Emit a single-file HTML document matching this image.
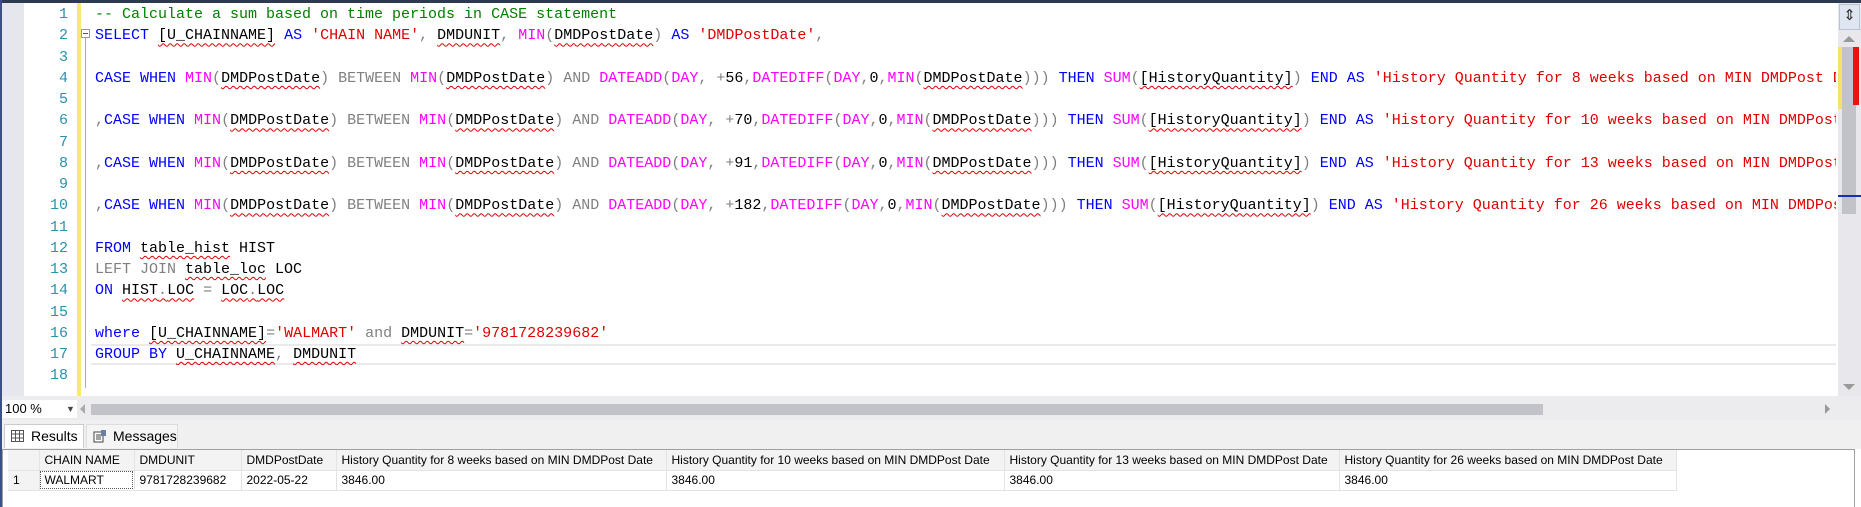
<!DOCTYPE html>
<html><head><meta charset="utf-8"><style>
*{margin:0;padding:0;box-sizing:border-box}
body{width:1861px;height:507px;overflow:hidden;background:#fff;position:relative;font-family:"Liberation Sans",Arial,sans-serif}
.top{position:absolute;left:0;top:0;width:1861px;height:3px;background:#2e3a4f}
.lb{position:absolute;left:0;top:0;width:2px;height:507px;background:#3c4f8c}
.gut{position:absolute;left:2px;top:3px;width:22px;height:393px;background:#e6e7ec}
.nums{position:absolute;left:24px;top:4px;width:44px;text-align:right;font:15px/21.25px "Liberation Mono",monospace;color:#2b91af}
.yb{position:absolute;left:77px;top:3px;width:4px;height:393px;background:#fbe86c}
.fold{position:absolute;left:81px;top:29px;width:9px;height:9px;border:1px solid #999;background:#fff}
.fold:after{content:"";position:absolute;left:1px;top:3px;width:5px;height:1px;background:#555}
.fl{position:absolute;left:85px;top:38px;width:1px;height:350px;background:#aaa}
.code{position:absolute;left:95px;top:4px;width:1741px;overflow:hidden;white-space:pre;font:15px/21.25px "Liberation Mono",monospace;color:#000}
.cur{position:absolute;left:91px;top:344px;width:1745px;height:21px;border-top:2px solid #eaeaea;border-bottom:2px solid #eaeaea}
.k{color:#0000ff}.f{color:#ff00ff}.g{color:#808080}.s{color:#e00000}.c{color:#008000}
.u{text-decoration:underline wavy #e00000;text-decoration-thickness:1px;text-underline-offset:3px}
.vs{position:absolute;left:1838px;top:3px;width:23px;height:393px;background:#e8e8ec}
.sp{position:absolute;left:1839px;top:4px;width:21px;height:26px;background:#dfe6f2;border:1px solid #b8c3d8;font-size:15px;text-align:center;line-height:22px;color:#333}
.zb{position:absolute;left:2px;top:396px;width:1859px;height:24px;background:#ececef}
.zc{position:absolute;left:2px;top:400px;width:75px;height:18px;background:#fff;font-size:13px;line-height:18px;padding-left:3px;color:#000}
.hs{position:absolute;left:91px;top:404px;width:1452px;height:11px;background:#c2c3c9}
.tabs{position:absolute;left:2px;top:420px;width:1859px;height:29px;background:#f0f0f0}
.tab{position:absolute;top:424px;height:24px;font-size:14px;line-height:22px;color:#000;padding-left:26px}
.grid{position:absolute;left:2px;top:449px;width:1853px;height:58px;background:#fff;border:1px solid #a0a0a0;border-bottom:none}
table{position:absolute;left:8px;top:450px;border-collapse:collapse;table-layout:fixed;width:1668px;font-size:12px;font-family:"Liberation Sans",Arial,sans-serif}
td{height:20px;padding:0 5px;border-right:1px solid #e3e3e3;border-bottom:1px solid #e3e3e3;white-space:nowrap;overflow:hidden;color:#000}
tr.h td{background:#f3f3f3}
</style></head><body>
<div class="top"></div>
<div class="gut"></div>
<div class="nums">1<br>2<br>3<br>4<br>5<br>6<br>7<br>8<br>9<br>10<br>11<br>12<br>13<br>14<br>15<br>16<br>17<br>18</div>
<div class="yb"></div>
<div class="fl"></div>
<div class="fold"></div>
<div class="cur"></div>
<div class="code"><span class="c">-- Calculate a sum based on time periods in CASE statement</span>
<span class="k">SELECT</span> <span class="u">[U_CHAINNAME]</span> <span class="k">AS</span> <span class="s">'CHAIN NAME'</span><span class="g">,</span> <span class="u">DMDUNIT</span><span class="g">,</span> <span class="f">MIN</span><span class="g">(</span><span class="u">DMDPostDate</span><span class="g">)</span> <span class="k">AS</span> <span class="s">'DMDPostDate'</span><span class="g">,</span>

<span class="k">CASE WHEN</span> <span class="f">MIN</span><span class="g">(</span><span class="u">DMDPostDate</span><span class="g">)</span> <span class="g">BETWEEN</span> <span class="f">MIN</span><span class="g">(</span><span class="u">DMDPostDate</span><span class="g">)</span> <span class="g">AND</span> <span class="f">DATEADD</span><span class="g">(</span><span class="f">DAY</span><span class="g">,</span> <span class="g">+</span>56<span class="g">,</span><span class="f">DATEDIFF</span><span class="g">(</span><span class="f">DAY</span><span class="g">,</span>0<span class="g">,</span><span class="f">MIN</span><span class="g">(</span><span class="u">DMDPostDate</span><span class="g">)))</span> <span class="k">THEN</span> <span class="f">SUM</span><span class="g">(</span><span class="u">[HistoryQuantity]</span><span class="g">)</span> <span class="k">END AS</span> <span class="s">'History Quantity for 8 weeks based on MIN DMDPost Date'</span>

<span class="g">,</span><span class="k">CASE WHEN</span> <span class="f">MIN</span><span class="g">(</span><span class="u">DMDPostDate</span><span class="g">)</span> <span class="g">BETWEEN</span> <span class="f">MIN</span><span class="g">(</span><span class="u">DMDPostDate</span><span class="g">)</span> <span class="g">AND</span> <span class="f">DATEADD</span><span class="g">(</span><span class="f">DAY</span><span class="g">,</span> <span class="g">+</span>70<span class="g">,</span><span class="f">DATEDIFF</span><span class="g">(</span><span class="f">DAY</span><span class="g">,</span>0<span class="g">,</span><span class="f">MIN</span><span class="g">(</span><span class="u">DMDPostDate</span><span class="g">)))</span> <span class="k">THEN</span> <span class="f">SUM</span><span class="g">(</span><span class="u">[HistoryQuantity]</span><span class="g">)</span> <span class="k">END AS</span> <span class="s">'History Quantity for 10 weeks based on MIN DMDPost Date'</span>

<span class="g">,</span><span class="k">CASE WHEN</span> <span class="f">MIN</span><span class="g">(</span><span class="u">DMDPostDate</span><span class="g">)</span> <span class="g">BETWEEN</span> <span class="f">MIN</span><span class="g">(</span><span class="u">DMDPostDate</span><span class="g">)</span> <span class="g">AND</span> <span class="f">DATEADD</span><span class="g">(</span><span class="f">DAY</span><span class="g">,</span> <span class="g">+</span>91<span class="g">,</span><span class="f">DATEDIFF</span><span class="g">(</span><span class="f">DAY</span><span class="g">,</span>0<span class="g">,</span><span class="f">MIN</span><span class="g">(</span><span class="u">DMDPostDate</span><span class="g">)))</span> <span class="k">THEN</span> <span class="f">SUM</span><span class="g">(</span><span class="u">[HistoryQuantity]</span><span class="g">)</span> <span class="k">END AS</span> <span class="s">'History Quantity for 13 weeks based on MIN DMDPost Date'</span>

<span class="g">,</span><span class="k">CASE WHEN</span> <span class="f">MIN</span><span class="g">(</span><span class="u">DMDPostDate</span><span class="g">)</span> <span class="g">BETWEEN</span> <span class="f">MIN</span><span class="g">(</span><span class="u">DMDPostDate</span><span class="g">)</span> <span class="g">AND</span> <span class="f">DATEADD</span><span class="g">(</span><span class="f">DAY</span><span class="g">,</span> <span class="g">+</span>182<span class="g">,</span><span class="f">DATEDIFF</span><span class="g">(</span><span class="f">DAY</span><span class="g">,</span>0<span class="g">,</span><span class="f">MIN</span><span class="g">(</span><span class="u">DMDPostDate</span><span class="g">)))</span> <span class="k">THEN</span> <span class="f">SUM</span><span class="g">(</span><span class="u">[HistoryQuantity]</span><span class="g">)</span> <span class="k">END AS</span> <span class="s">'History Quantity for 26 weeks based on MIN DMDPost Date'</span>

<span class="k">FROM</span> <span class="u">table_hist</span> HIST
<span class="g">LEFT JOIN</span> <span class="u">table_loc</span> LOC
<span class="k">ON</span> <span class="u">HIST<span class="g">.</span>LOC</span> <span class="g">=</span> <span class="u">LOC<span class="g">.</span>LOC</span>

<span class="k">where</span> <span class="u">[U_CHAINNAME]</span><span class="g">=</span><span class="s">'WALMART'</span> <span class="g">and</span> <span class="u">DMDUNIT</span><span class="g">=</span><span class="s">'9781728239682'</span>
<span class="k">GROUP BY</span> <span class="u">U_CHAINNAME</span><span class="g">,</span> <span class="u">DMDUNIT</span>
</div>
<div class="vs"></div>
<div class="sp">⇕</div>
<div style="position:absolute;left:1843px;top:36px;width:0;height:0;border-left:6px solid transparent;border-right:6px solid transparent;border-bottom:6px solid #999"></div>
<div style="position:absolute;left:1842px;top:47px;width:14px;height:167px;background:#c2c3c9"></div>
<div style="position:absolute;left:1838px;top:47px;width:4px;height:62px;background:#f5e26a"></div>
<div style="position:absolute;left:1853px;top:47px;width:6px;height:58px;background:#ee1111"></div>
<div style="position:absolute;left:1838px;top:195px;width:23px;height:2px;background:#1a2fb8"></div>
<div style="position:absolute;left:1843px;top:384px;width:0;height:0;border-left:6px solid transparent;border-right:6px solid transparent;border-top:6px solid #999"></div>
<div class="zb"></div>
<div class="zc">100 % <span style="position:absolute;left:64px;top:0;font-size:9px;color:#444">▼</span></div>
<div style="position:absolute;left:80px;top:404px;width:0;height:0;border-top:5px solid transparent;border-bottom:5px solid transparent;border-right:5px solid #aaa"></div>
<div class="hs"></div>
<div style="position:absolute;left:1825px;top:404px;width:0;height:0;border-top:5px solid transparent;border-bottom:5px solid transparent;border-left:5px solid #999"></div>
<div class="tabs"></div>
<div class="tab" style="left:4px;width:80px;background:#fff;border:1px solid #ccc;border-bottom:none">
<svg style="position:absolute;left:6px;top:5px" width="13" height="12"><rect x="0.5" y="0.5" width="12" height="11" fill="#fff" stroke="#555"/><path d="M0 4H13M0 8H13M4.5 0V12M8.5 0V12" stroke="#555"/></svg>Results</div>
<div class="tab" style="left:86px;width:92px;background:#f5f5f5;border:1px solid #ddd;border-bottom:none">
<svg style="position:absolute;left:6px;top:5px" width="14" height="13"><rect x="1" y="2" width="9" height="10" fill="#fff" stroke="#444"/><path d="M3 5H8M3 7H8M3 9H8" stroke="#444"/><rect x="8" y="0" width="5" height="6" fill="#6b7fa6"/></svg>Messages</div>
<div class="grid"></div>
<table>
<colgroup><col style="width:31px"><col style="width:95px"><col style="width:107px"><col style="width:95px"><col style="width:330px"><col style="width:338px"><col style="width:335px"><col style="width:337px"></colgroup>
<tr class="h"><td></td><td>CHAIN NAME</td><td>DMDUNIT</td><td>DMDPostDate</td><td>History Quantity for 8 weeks based on MIN DMDPost Date</td><td>History Quantity for 10 weeks based on MIN DMDPost Date</td><td>History Quantity for 13 weeks based on MIN DMDPost Date</td><td>History Quantity for 26 weeks based on MIN DMDPost Date</td></tr>
<tr><td style="background:#f3f3f3">1</td><td style="outline:1px dotted #555;outline-offset:-2px">WALMART</td><td>9781728239682</td><td>2022-05-22</td><td>3846.00</td><td>3846.00</td><td>3846.00</td><td>3846.00</td></tr>
</table>
<div class="lb"></div>
</body></html>
